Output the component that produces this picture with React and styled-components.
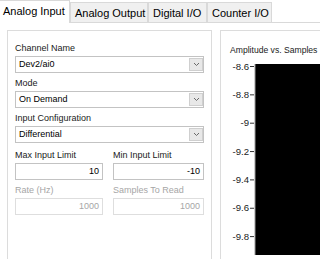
import React from 'react';
import styled, { createGlobalStyle } from 'styled-components';

const GlobalStyle = createGlobalStyle`
  html, body {
    margin: 0;
    padding: 0;
    background: #ffffff;
  }
  body {
    font-family: "Liberation Sans", Arial, sans-serif;
    color: #1a1a1a;
  }
`;

const Window = styled.div`
  width: 320px;
  height: 259px;
  overflow: hidden;
  background: #ffffff;
`;

const TabBar = styled.div`
  display: flex;
  align-items: flex-end;
  height: 22px;
  border-bottom: 1px solid #d9d9d9;
`;

const Tab = styled.div`
  box-sizing: border-box;
  width: ${(p) => p.$w}px;
  height: ${(p) => (p.$active ? 23 : 20)}px;
  margin-bottom: ${(p) => (p.$active ? -1 : 0)}px;
  padding: ${(p) => (p.$active ? '4px 0 0 3px' : '4px 0 0 4px')};
  background: ${(p) => (p.$active ? '#ffffff' : '#f0f0f0')};
  border: 1px solid #d9d9d9;
  border-bottom: none;
  border-left: ${(p) => (p.$first ? 'none' : '1px solid #d9d9d9')};
  font-size: 11px;
  line-height: 12px;
  color: #000;
  white-space: nowrap;
  z-index: ${(p) => (p.$active ? 1 : 0)};
`;

const Body = styled.div`
  display: flex;
  gap: 8px;
  padding: 7px 0 0 7px;
`;

const GroupBox = styled.div`
  box-sizing: border-box;
  flex: none;
  width: ${(p) => p.$w}px;
  height: 240px;
  border: 1px solid #dcdcdc;
  padding: ${(p) => p.$pad};
`;

const Field = styled.div`
  display: flex;
  flex-direction: column;
  margin-bottom: 5px;
  margin-top: ${(p) => p.$mt || 0}px;
`;

const Label = styled.div`
  font-size: 9px;
  line-height: 11px;
  height: 11px;
  margin-bottom: 2px;
  color: ${(p) => (p.$disabled ? '#a6a6a6' : '#1a1a1a')};
  white-space: nowrap;
`;

const Combo = styled.div`
  box-sizing: border-box;
  position: relative;
  height: 17px;
  border: 1px solid #c3c3c3;
  background: #fff;
  font-size: 9px;
  line-height: 15px;
  padding-left: 3px;
  color: #000;
`;

const DropButton = styled.div`
  position: absolute;
  top: 1px;
  right: 0px;
  width: 14px;
  height: 13px;
  box-sizing: border-box;
  border: 1px solid #cfcfcf;
  background: #e8e8e8;
  display: flex;
  align-items: center;
  justify-content: center;
`;

const Row = styled.div`
  display: grid;
  grid-template-columns: 88px 1fr;
  column-gap: 10px;
`;

const NumBox = styled.div`
  box-sizing: border-box;
  height: 17px;
  border: 1px solid ${(p) => (p.$disabled ? '#dedede' : '#c3c3c3')};
  background: #fff;
  font-size: 9px;
  line-height: 15px;
  text-align: right;
  padding-right: 3px;
  color: ${(p) => (p.$disabled ? '#a6a6a6' : '#000')};
`;

const ChartTitle = styled.div`
  font-size: 8.6px;
  line-height: 11px;
  white-space: nowrap;
  color: #1a1a1a;
`;

const Chevron = () => (
  <svg width="7" height="5" viewBox="0 0 7 5">
    <path d="M1 1 L3.5 3.5 L6 1" fill="none" stroke="#6a6a6a" strokeWidth="1" />
  </svg>
);

const ComboBox = ({ value }) => (
  <Combo>
    {value}
    <DropButton>
      <Chevron />
    </DropButton>
  </Combo>
);

const ticks = ['-8.6', '-8.8', '-9', '-9.2', '-9.4', '-9.6', '-9.8'];

const Plot = () => (
  <svg width="100" height="200" style={{ display: 'block', marginTop: '-1px' }}>
    <rect x="25" y="9" width="80" height="200" fill="#000" />
    <line x1="25" y1="9" x2="25" y2="200" stroke="#9a9a9a" strokeWidth="1" />
    {ticks.map((t, i) => {
      const y = 11.5 + i * 28.35;
      return (
        <g key={t}>
          <text
            x="19"
            y={y + 3.2}
            textAnchor="end"
            fontSize="9.6"
            fontFamily='"Liberation Sans", Arial, sans-serif'
            fill="#222"
          >
            {t}
          </text>
          <line x1="20" y1={y} x2="24" y2={y} stroke="#333" strokeWidth="1" />
        </g>
      );
    })}
  </svg>
);

export default function App() {
  return (
    <Window>
      <GlobalStyle />
      <TabBar>
        <Tab $active $first $w={70}>Analog Input</Tab>
        <Tab $w={78}>Analog Output</Tab>
        <Tab $w={59}>Digital I/O</Tab>
        <Tab $w={65}>Counter I/O</Tab>
      </TabBar>
      <Body>
        <GroupBox $w={205} $pad="12px 7px 0 7px">
          <Field>
            <Label>Channel Name</Label>
            <ComboBox value="Dev2/ai0" />
          </Field>
          <Field>
            <Label>Mode</Label>
            <ComboBox value="On Demand" />
          </Field>
          <Field>
            <Label>Input Configuration</Label>
            <ComboBox value="Differential" />
          </Field>
          <Row>
            <Field $mt={2}>
              <Label>Max Input Limit</Label>
              <NumBox>10</NumBox>
            </Field>
            <Field $mt={2}>
              <Label>Min Input Limit</Label>
              <NumBox>-10</NumBox>
            </Field>
          </Row>
          <Row>
            <Field>
              <Label $disabled>Rate (Hz)</Label>
              <NumBox $disabled>1000</NumBox>
            </Field>
            <Field>
              <Label $disabled>Samples To Read</Label>
              <NumBox $disabled>1000</NumBox>
            </Field>
          </Row>
        </GroupBox>
        <GroupBox $w={140} $pad="14px 0 0 9px">
          <ChartTitle>Amplitude vs. Samples</ChartTitle>
          <Plot />
        </GroupBox>
      </Body>
    </Window>
  );
}
